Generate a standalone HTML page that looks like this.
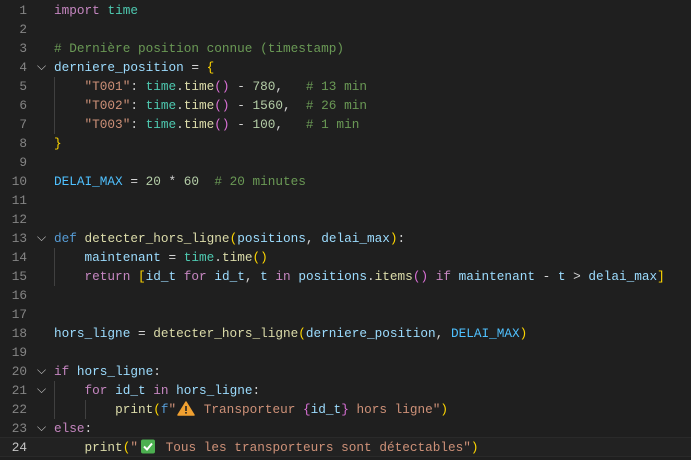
<!DOCTYPE html>
<html><head><meta charset="utf-8"><style>
html,body{margin:0;padding:0;background:#1f1f1f;width:691px;height:457px;overflow:hidden}
.l{position:absolute;left:0;height:19px;width:691px;font-family:"Liberation Mono",monospace;font-size:12.73px;line-height:19px;white-space:pre;color:#d4d4d4}
.n{position:absolute;left:0;width:27px;text-align:right;color:#858585}
.c{position:absolute;left:54px}
.f{position:absolute;left:37px;top:0;color:#c5c5c5;font-size:12px}
.cur{background:#222;border-top:1px solid #2a2a2a;border-bottom:1px solid #2a2a2a;box-sizing:border-box}
.g{position:absolute;width:1px;background:#404040}
.k{color:#c586c0}.d{color:#569cd6}.m{color:#4ec9b0}.fn{color:#dcdcaa}.v{color:#9cdcfe}.cs{color:#4fc1ff}.s{color:#ce9178}.nu{color:#b5cea8}.cm{color:#6a9955}
.b1{color:#ffd700}.b2{color:#da70d6}.b3{color:#179fff}
.e{display:inline-block;width:20px;height:15px;vertical-align:-3px;position:relative}
</style></head><body>
<div class="g" style="left:54px;top:77px;height:57px"></div>
<div class="g" style="left:54px;top:248px;height:38px"></div>
<div class="g" style="left:54px;top:381px;height:38px"></div>
<div class="g" style="left:85px;top:400px;height:19px"></div>
<div class="g" style="left:54px;top:437px;height:20px"></div>

<div class="l" style="top:1px"><span class="n">1</span><span class="c"><span class="k">import</span> <span class="m">time</span></span></div>
<div class="l" style="top:20px"><span class="n">2</span></div>
<div class="l" style="top:39px"><span class="n">3</span><span class="c"><span class="cm"># Dernière position connue (timestamp)</span></span></div>
<div class="l" style="top:58px"><span class="n">4</span><span class="f">⌵</span><span class="c"><span class="v">derniere_position</span> = <span class="b1">{</span></span></div>
<div class="l" style="top:77px"><span class="n">5</span><span class="c">    <span class="s">"T001"</span>: <span class="m">time</span>.<span class="fn">time</span><span class="b2">()</span> - <span class="nu">780</span>,   <span class="cm"># 13 min</span></span></div>
<div class="l" style="top:96px"><span class="n">6</span><span class="c">    <span class="s">"T002"</span>: <span class="m">time</span>.<span class="fn">time</span><span class="b2">()</span> - <span class="nu">1560</span>,  <span class="cm"># 26 min</span></span></div>
<div class="l" style="top:115px"><span class="n">7</span><span class="c">    <span class="s">"T003"</span>: <span class="m">time</span>.<span class="fn">time</span><span class="b2">()</span> - <span class="nu">100</span>,   <span class="cm"># 1 min</span></span></div>
<div class="l" style="top:134px"><span class="n">8</span><span class="c"><span class="b1">}</span></span></div>
<div class="l" style="top:153px"><span class="n">9</span></div>
<div class="l" style="top:172px"><span class="n">10</span><span class="c"><span class="cs">DELAI_MAX</span> = <span class="nu">20</span> * <span class="nu">60</span>  <span class="cm"># 20 minutes</span></span></div>
<div class="l" style="top:191px"><span class="n">11</span></div>
<div class="l" style="top:210px"><span class="n">12</span></div>
<div class="l" style="top:229px"><span class="n">13</span><span class="f">⌵</span><span class="c"><span class="d">def</span> <span class="fn">detecter_hors_ligne</span><span class="b1">(</span><span class="v">positions</span>, <span class="v">delai_max</span><span class="b1">)</span>:</span></div>
<div class="l" style="top:248px"><span class="n">14</span><span class="c">    <span class="v">maintenant</span> = <span class="m">time</span>.<span class="fn">time</span><span class="b1">()</span></span></div>
<div class="l" style="top:267px"><span class="n">15</span><span class="c">    <span class="k">return</span> <span class="b1">[</span><span class="v">id_t</span> <span class="k">for</span> <span class="v">id_t</span>, <span class="v">t</span> <span class="k">in</span> <span class="v">positions</span>.<span class="fn">items</span><span class="b2">()</span> <span class="k">if</span> <span class="v">maintenant</span> - <span class="v">t</span> &gt; <span class="v">delai_max</span><span class="b1">]</span></span></div>
<div class="l" style="top:286px"><span class="n">16</span></div>
<div class="l" style="top:305px"><span class="n">17</span></div>
<div class="l" style="top:324px"><span class="n">18</span><span class="c"><span class="v">hors_ligne</span> = <span class="fn">detecter_hors_ligne</span><span class="b1">(</span><span class="v">derniere_position</span>, <span class="cs">DELAI_MAX</span><span class="b1">)</span></span></div>
<div class="l" style="top:343px"><span class="n">19</span></div>
<div class="l" style="top:362px"><span class="n">20</span><span class="f">⌵</span><span class="c"><span class="k">if</span> <span class="v">hors_ligne</span>:</span></div>
<div class="l" style="top:381px"><span class="n">21</span><span class="f">⌵</span><span class="c">    <span class="k">for</span> <span class="v">id_t</span> <span class="k">in</span> <span class="v">hors_ligne</span>:</span></div>
<div class="l" style="top:400px"><span class="n">22</span><span class="c">        <span class="fn">print</span><span class="b1">(</span><span class="d">f</span><span class="s">"<span class="e"><svg width="20" height="15" viewBox="0 0 20 15"><path d="M10 1 L18 14 L2 14 Z" fill="#f0a030" stroke="#f0a030" stroke-linejoin="round" stroke-width="1.5"/><rect x="9.2" y="5" width="1.6" height="5" fill="#222"/><rect x="9.2" y="11" width="1.6" height="1.6" fill="#222"/></svg></span> Transporteur </span><span class="b2">{</span><span class="v">id_t</span><span class="b2">}</span><span class="s"> hors ligne"</span><span class="b1">)</span></span></div>
<div class="l" style="top:419px"><span class="n">23</span><span class="f">⌵</span><span class="c"><span class="k">else</span>:</span></div>
<div class="l cur" style="top:437px;height:20px"><span class="n" style="color:#c6c6c6;top:0">24</span><span class="c">    <span class="fn">print</span><span class="b1">(</span><span class="s">"<span class="e"><svg width="20" height="15" viewBox="0 0 20 15"><rect x="3" y="0.5" width="14" height="14" rx="2" fill="#4caf50"/><path d="M6 7.5 L9 10.5 L14 4.5" fill="none" stroke="#fff" stroke-width="2"/></svg></span> Tous les transporteurs sont détectables"</span><span class="b1">)</span></span></div>
</body></html>
